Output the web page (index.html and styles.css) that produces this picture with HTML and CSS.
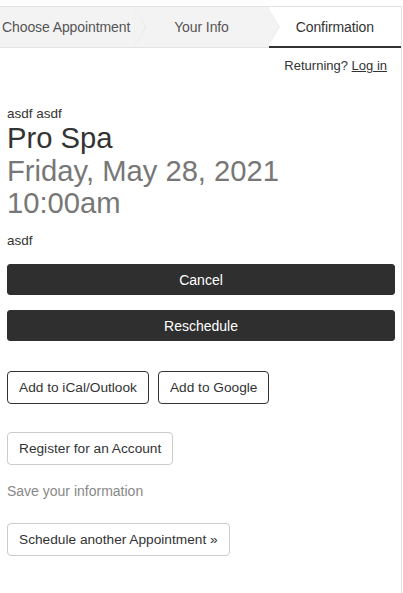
FILE: index.html
```html
<!DOCTYPE html>
<html>
<head>
<meta charset="utf-8">
<link rel="stylesheet" href="styles.css">
</head>
<body>
<div class="page">
  <nav class="steps">
    <div class="step">Choose Appointment</div>
    <div class="step">Your Info</div>
    <div class="step active">Confirmation</div>
  </nav>
  <div class="content">
    <div class="returning">Returning? <a href="#">Log in</a></div>
    <div class="who">asdf asdf</div>
    <h1 class="biz">Pro Spa</h1>
    <h2 class="when">Friday, May 28, 2021<br>10:00am</h2>
    <div class="note">asdf</div>
    <button class="btn btn-dark">Cancel</button>
    <button class="btn btn-dark">Reschedule</button>
    <div class="cal-row">
      <button class="btn btn-outline">Add to iCal/Outlook</button>
      <button class="btn btn-outline">Add to Google</button>
    </div>
    <button class="btn btn-light register">Register for an Account</button>
    <div class="save">Save your information</div>
    <button class="btn btn-light schedule">Schedule another Appointment »</button>
  </div>
</div>
</body>
</html>
```

FILE: styles.css
```css
html, body {
  margin: 0;
  padding: 0;
  background: #fff;
}
body {
  font-family: "Liberation Sans", Arial, sans-serif;
  color: #333;
  font-size: 14px;
}
.page {
  margin-top: 6px;
  width: 402px;
  min-height: 587px;
  border-top: 1px solid #e3e3e3;
  border-right: 1px solid #e3e3e3;
  box-sizing: border-box;
}
.steps {
  display: flex;
  height: 40px;
  background: #f3f3f3;
  border-bottom: 1px solid #e3e3e3;
}
.step {
  flex: 1;
  position: relative;
  display: flex;
  align-items: center;
  justify-content: center;
  color: #555;
  font-size: 14px;
  letter-spacing: -0.1px;
  white-space: nowrap;
  border-right: 1px solid #ebebeb;
}
.step:not(.active)::before,
.step:not(.active)::after {
  content: "";
  position: absolute;
  top: 0;
  bottom: 0;
  clip-path: polygon(0 0, 100% 50%, 0 100%);
  z-index: 2;
}
.step:not(.active)::before {
  right: -12px;
  width: 12px;
  background: #e6e6e6;
}
.step:not(.active)::after {
  right: -11px;
  width: 11px;
  background: #f3f3f3;
}
.step:first-child {
  justify-content: flex-start;
  padding-left: 2px;
}
.step.active {
  background: #fff;
  color: #333;
  border-right: none;
  border-bottom: 2px solid #333;
  margin-bottom: -1px;
}
.content {
  padding: 0 6px 0 7px;
}
.returning {
  text-align: right;
  font-size: 13px;
  padding: 9px 8px 0 0;
  line-height: 18px;
}
.returning a {
  color: #333;
  text-decoration: underline;
}
.who {
  margin-top: 31px;
  font-size: 13.5px;
  line-height: 16px;
}
.biz {
  margin: 0;
  font-weight: normal;
  font-size: 29.2px;
  line-height: 33px;
  color: #333;
}
.when {
  margin: 0;
  font-weight: normal;
  font-size: 29.2px;
  line-height: 32px;
  color: #777;
}
.note {
  margin-top: 14px;
  font-size: 13.5px;
  line-height: 16px;
}
.btn {
  font-family: "Liberation Sans", Arial, sans-serif;
  font-size: 13.7px;
  border-radius: 3px;
  cursor: pointer;
  box-sizing: border-box;
  display: block;
}
.btn-dark {
  width: 100%;
  height: 31px;
  background: #2f2f2f;
  color: #fff;
  border: 1px solid #2f2f2f;
  font-size: 14px;
}
.btn-dark:first-of-type {
  margin-top: 15px;
}
.btn-dark + .btn-dark {
  margin-top: 15px;
}
.cal-row {
  display: flex;
  gap: 9px;
  margin-top: 30px;
}
.btn-outline {
  height: 33px;
  padding: 0 11px;
  background: #fff;
  color: #333;
  border: 1px solid #333;
  border-radius: 4px;
}
.btn-light {
  height: 33px;
  padding: 0 11px;
  background: #fff;
  color: #333;
  border: 1px solid #ccc;
  border-radius: 4px;
}
.register {
  margin-top: 28px;
}
.save {
  color: #888;
  font-size: 14px;
  line-height: 18px;
  margin-top: 17px;
}
.schedule {
  margin-top: 23px;
}
```
